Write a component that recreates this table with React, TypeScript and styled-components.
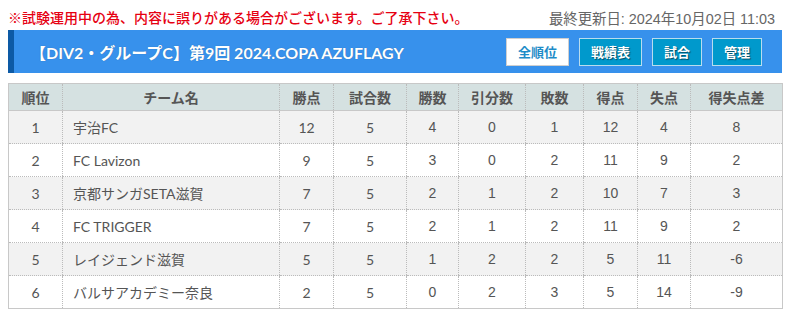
import React from 'react';
import styled, { createGlobalStyle } from 'styled-components';

const GlobalStyle = createGlobalStyle`
  body {
    margin: 8px;
    background: #fff;
    font-family: Lato, "Noto Sans CJK JP", sans-serif;
    color: #555;
  }
`;

interface Team {
  rank: number,
  name: string,
  points: number,
  played: number,
  won: number,
  drawn: number,
  lost: number,
  goalsFor: number,
  goalsAgainst: number,
  diff: number
}

const teams: Team[] = [
  { rank: 1, name: "宇治FC", points: 12, played: 5, won: 4, drawn: 0, lost: 1, goalsFor: 12, goalsAgainst: 4, diff: 8 },
  { rank: 2, name: "FC Lavizon", points: 9, played: 5, won: 3, drawn: 0, lost: 2, goalsFor: 11, goalsAgainst: 9, diff: 2 },
  { rank: 3, name: "京都サンガSETA滋賀", points: 7, played: 5, won: 2, drawn: 1, lost: 2, goalsFor: 10, goalsAgainst: 7, diff: 3 },
  { rank: 4, name: "FC TRIGGER", points: 7, played: 5, won: 2, drawn: 1, lost: 2, goalsFor: 11, goalsAgainst: 9, diff: 2 },
  { rank: 5, name: "レイジェンド滋賀", points: 5, played: 5, won: 1, drawn: 2, lost: 2, goalsFor: 5, goalsAgainst: 11, diff: -6 },
  { rank: 6, name: "バルサアカデミー奈良", points: 2, played: 5, won: 0, drawn: 2, lost: 3, goalsFor: 5, goalsAgainst: 14, diff: -9 },
];

const columns = [
  { label: "順位", width: 54 },
  { label: "チーム名", width: 217 },
  { label: "勝点", width: 54 },
  { label: "試合数", width: 73 },
  { label: "勝数", width: 52 },
  { label: "引分数", width: 67 },
  { label: "敗数", width: 58 },
  { label: "得点", width: 54 },
  { label: "失点", width: 53 },
  { label: "得失点差", width: 92 },
];

const navButtons = [
  { label: "全順位", active: true },
  { label: "戦績表", active: false },
  { label: "試合", active: false },
  { label: "管理", active: false },
];

export default function App() {
  return <>
    <GlobalStyle />
    <TopRow>
      <Notice>※試験運用中の為、内容に誤りがある場合がございます。ご了承下さい。</Notice>
      <Updated>最終更新日: 2024年10月02日 11:03</Updated>
    </TopRow>
    <TitleBar>
      <Title>【DIV2・グループC】第9回 2024.COPA AZUFLAGY</Title>
      <Nav>
        {navButtons.map(b => (
          <NavButton key={b.label} $active={b.active}>{b.label}</NavButton>
        ))}
      </Nav>
    </TitleBar>
    <Table>
      <colgroup>
        {columns.map(c => <col key={c.label} style={{ width: c.width }} />)}
      </colgroup>
      <thead>
        <tr>
          {columns.map(c => <Th key={c.label}>{c.label}</Th>)}
        </tr>
      </thead>
      <tbody>
        {teams.map((t, i) => (
          <Row key={t.rank} $odd={i % 2 === 0}>
            <Td>{t.rank}</Td>
            <Td $left>{t.name}</Td>
            <Td>{t.points}</Td>
            <Td>{t.played}</Td>
            <Td $arial>{t.won}</Td>
            <Td $arial>{t.drawn}</Td>
            <Td $arial>{t.lost}</Td>
            <Td $arial>{t.goalsFor}</Td>
            <Td $arial>{t.goalsAgainst}</Td>
            <Td $arial>{t.diff}</Td>
          </Row>
        ))}
      </tbody>
    </Table>
  </>
}

const TopRow = styled.div`
  display: flex;
  justify-content: space-between;
  align-items: center;
  height: 18px;
  margin-bottom: 4px;
  padding-right: 12px;
`;

const Notice = styled.div`
  color: #e60012;
  font-family: "Noto Sans CJK JP", sans-serif;
  font-size: 14px;
  font-weight: 500;
`;

const Updated = styled.div`
  color: #666;
  font-family: "Liberation Sans", "Noto Sans CJK JP", sans-serif;
  font-size: 14.4px;
`;

const TitleBar = styled.div`
  display: flex;
  align-items: center;
  justify-content: space-between;
  width: 774px;
  height: 43px;
  background: #3791ec;
  border-left: 6px solid #0d5aa5;
  padding: 0 20px 0 16px;
  box-sizing: border-box;
`;

const Title = styled.h1`
  margin: 0;
  color: #fff;
  font-family: Lato, "Noto Sans CJK JP", sans-serif;
  font-size: 16px;
  font-weight: 700;
  text-shadow: 0 0 1px rgba(0, 0, 0, 0.3);
`;

const Nav = styled.div`
  display: flex;
  gap: 10px;
`;

const NavButton = styled.button<{ $active: boolean }>`
  height: 28px;
  padding: 0 11px;
  box-sizing: border-box;
  font-family: "Noto Sans CJK JP", sans-serif;
  font-size: 13px;
  font-weight: 700;
  cursor: pointer;
  background: ${p => p.$active ? '#fff' : '#0099cc'};
  color: ${p => p.$active ? '#1e8cc8' : '#fff'};
  border: 1px solid ${p => p.$active ? '#cfcfcf' : '#b8dcee'};
  text-shadow: ${p => p.$active ? 'none' : '1px 1px 1px rgba(0,0,0,0.5)'};
`;

const Table = styled.table`
  margin-top: 10px;
  width: 774px;
  table-layout: fixed;
  border-collapse: collapse;
  border: 1px solid #c8c8c8;
  font-size: 14px;
`;

const Th = styled.th`
  height: 26px;
  padding: 0;
  background: #d5e1e1;
  color: #555;
  font-family: "Noto Sans CJK JP", sans-serif;
  font-size: 14px;
  font-weight: 700;
  text-align: center;
  border-left: 1px dotted #bbb;
  border-bottom: 1px solid #c8c8c8;
  &:first-child { border-left: none; }
`;

const Row = styled.tr<{ $odd: boolean }>`
  background: ${p => p.$odd ? '#f2f2f2' : '#fff'};
`;

const Td = styled.td<{ $left?: boolean, $arial?: boolean }>`
  height: 32px;
  padding: 0 ${p => p.$left ? '10px' : '0'};
  text-align: ${p => p.$left ? 'left' : 'center'};
  font-family: ${p => p.$arial ? '"Liberation Sans", "Noto Sans CJK JP", sans-serif' : 'Lato, "Noto Sans CJK JP", sans-serif'};
  color: #555;
  border-left: 1px dotted #bbb;
  border-bottom: 1px dotted #bbb;
  &:first-child { border-left: none; }
`;
